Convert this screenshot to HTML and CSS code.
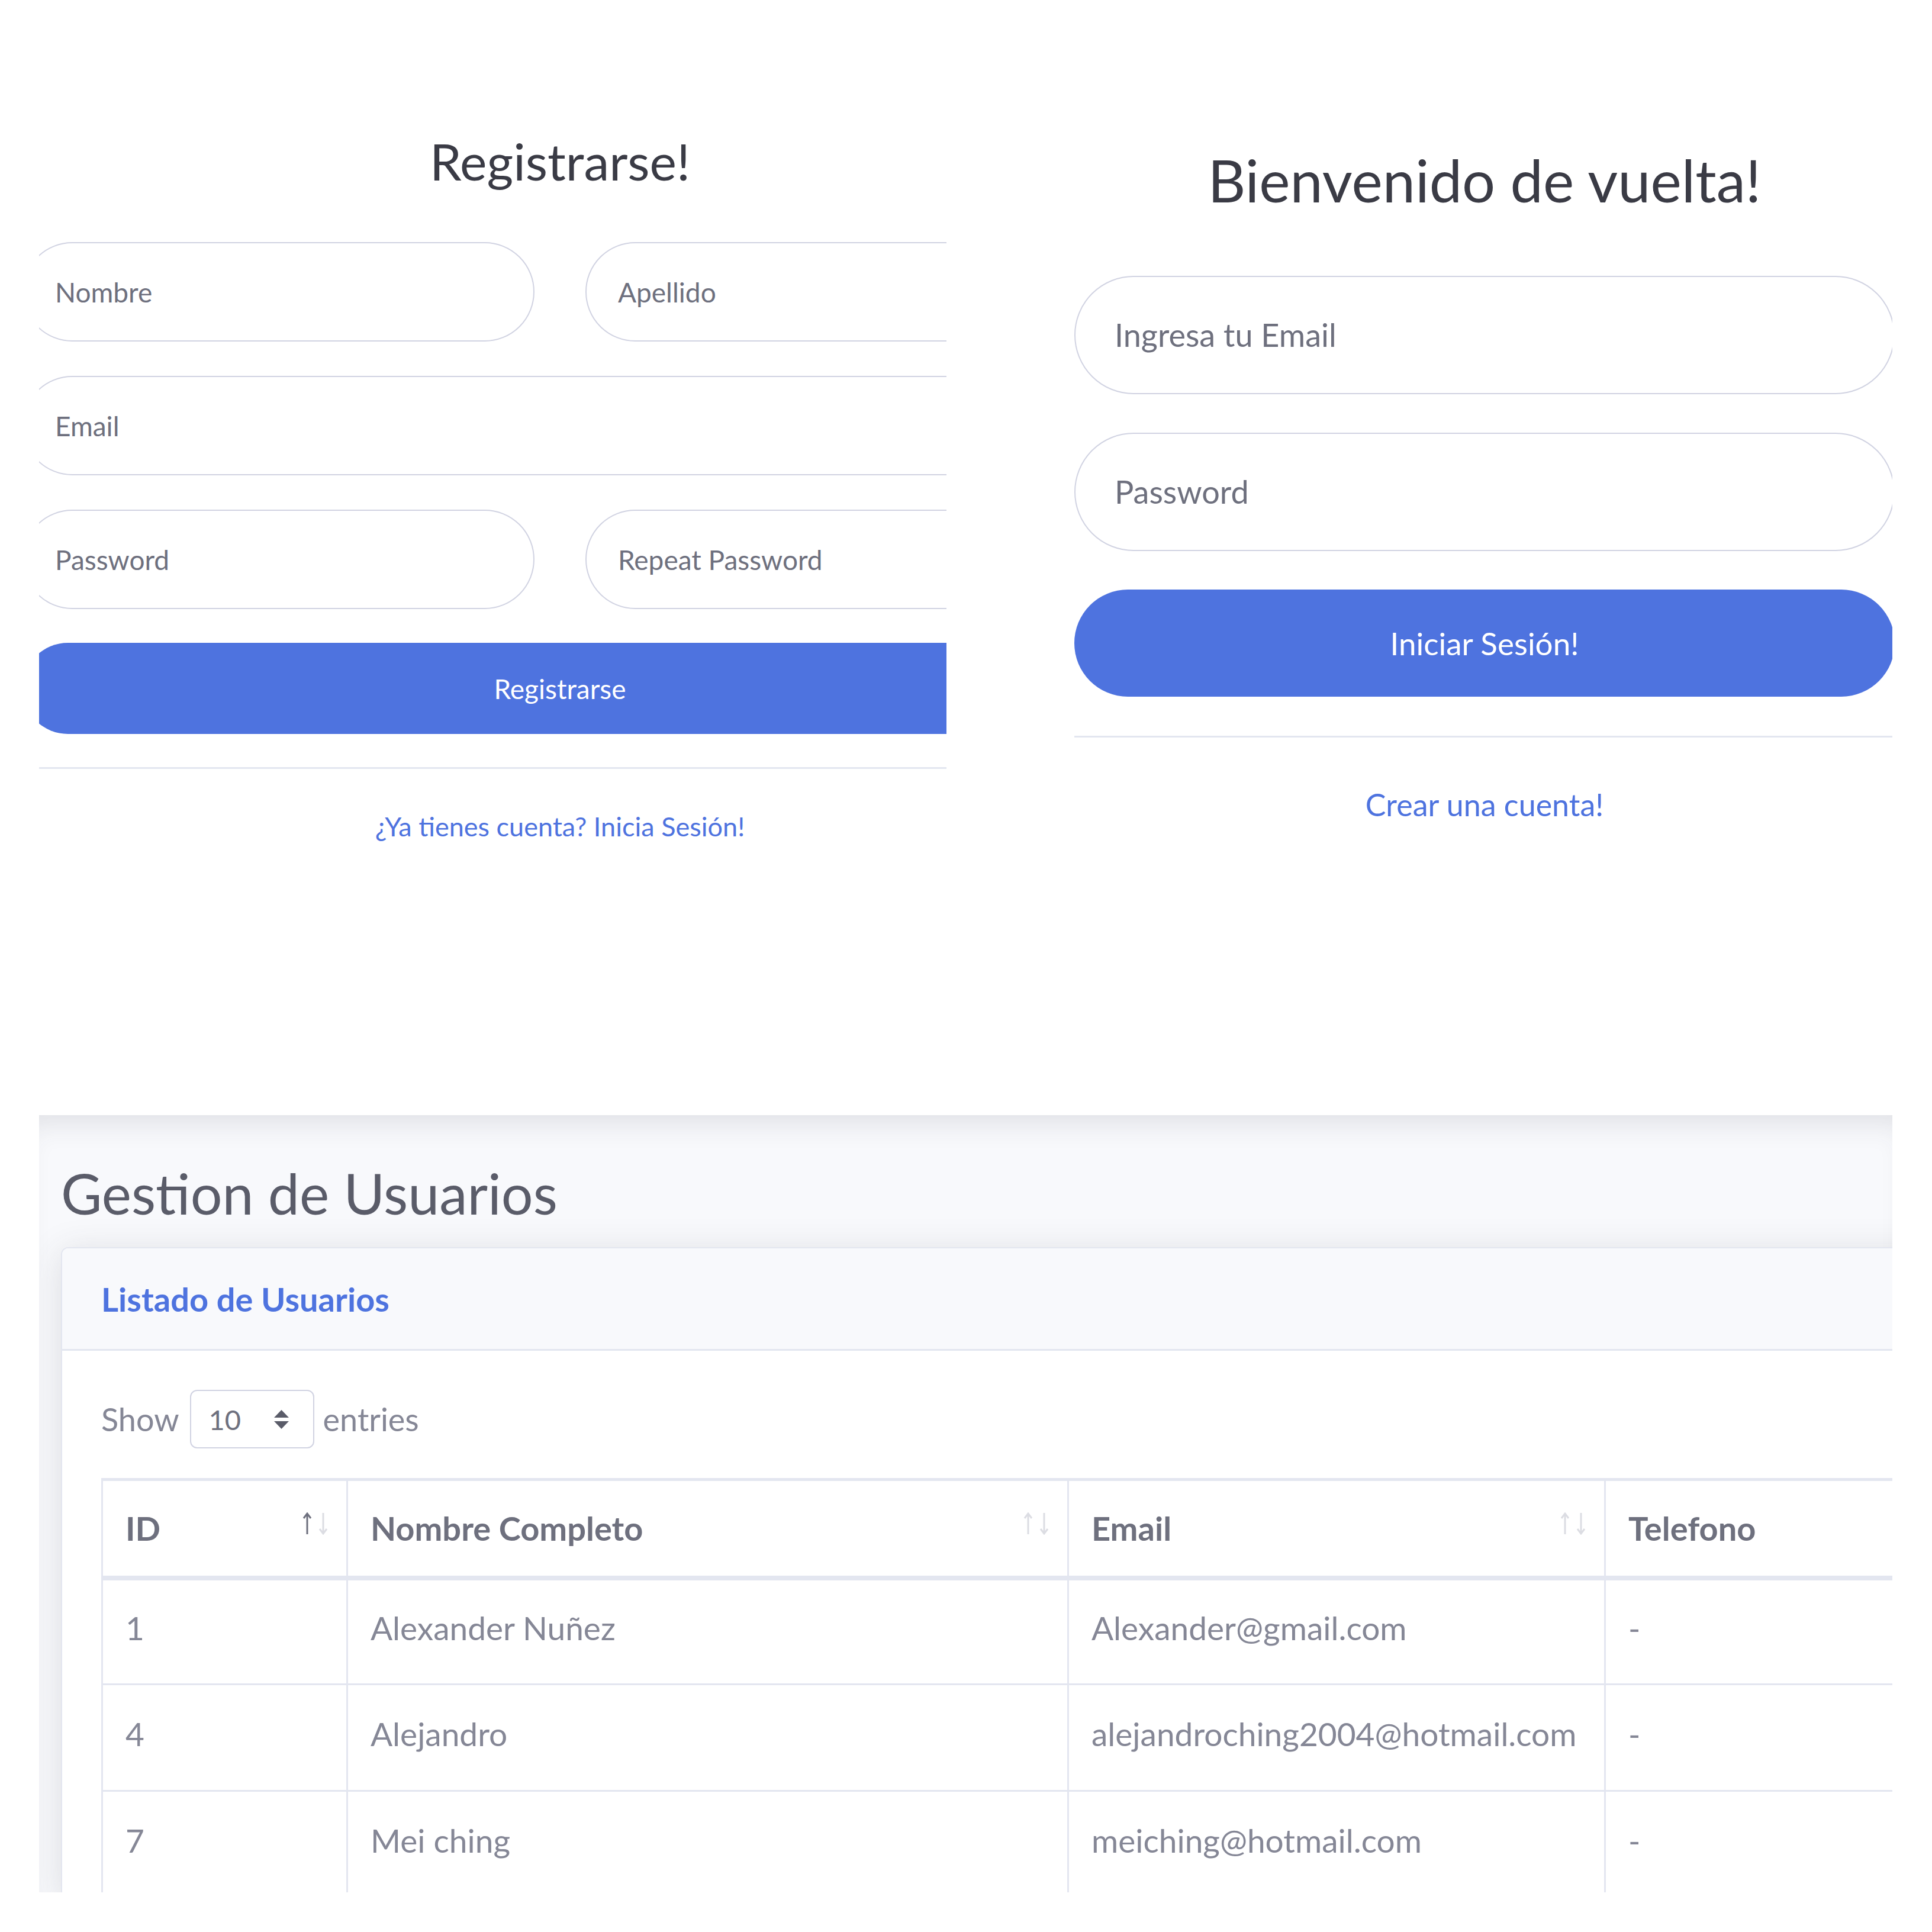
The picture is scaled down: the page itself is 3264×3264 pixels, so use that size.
FILE: index.html
```html
<!DOCTYPE html>
<html lang="es">
<head>
<meta charset="utf-8">
<title>Usuarios</title>
<link rel="stylesheet" href="styles.css">
</head>
<body>
<div class="page">
  <div class="top">
    <section class="reg-panel">
      <form class="reg-form">
        <h1 class="reg-title">Registrarse!</h1>
        <div class="stack reg-stack">
          <div class="row2">
            <input class="field reg-field" type="text" placeholder="Nombre">
            <input class="field reg-field" type="text" placeholder="Apellido">
          </div>
          <input class="field reg-field" type="email" placeholder="Email">
          <div class="row2">
            <input class="field reg-field" type="password" placeholder="Password">
            <input class="field reg-field" type="password" placeholder="Repeat Password">
          </div>
        </div>
        <button class="btn reg-btn" type="button">Registrarse</button>
        <hr class="sep reg-sep">
        <div class="link-row reg-link"><a href="#">¿Ya tienes cuenta? Inicia Sesión!</a></div>
      </form>
    </section>
    <section class="login-panel">
      <form class="login-form">
        <h1 class="login-title">Bienvenido de vuelta!</h1>
        <div class="stack login-stack">
          <input class="field login-field" type="email" placeholder="Ingresa tu Email">
          <input class="field login-field" type="password" placeholder="Password">
        </div>
        <button class="btn login-btn" type="button">Iniciar Sesión!</button>
        <hr class="sep login-sep">
        <div class="link-row login-link"><a href="#">Crear una cuenta!</a></div>
      </form>
    </section>
  </div>

  <section class="users-panel">
    <h1 class="users-title">Gestion de Usuarios</h1>
    <div class="card">
      <div class="card-header"><h6>Listado de Usuarios</h6></div>
      <div class="card-body">
        <div class="length">
          <span>Show</span>
          <div class="select">
            <span>10</span>
            <svg class="caret" width="27" height="34" viewBox="0 0 27 34"><path d="M1 14 L13.5 1 L26 14 Z M1 20 L26 20 L13.5 33 Z" fill="#5a5c69"/></svg>
          </div>
          <span>entries</span>
        </div>
        <table class="users">
          <colgroup>
            <col class="w-id"><col class="w-name"><col class="w-mail"><col class="w-tel">
          </colgroup>
          <thead>
            <tr>
              <th class="sortable">ID
                <svg class="arr arr-up on" width="18" height="38" viewBox="0 0 18 38"><path d="M9 3 V37 M3 10 L9 2 L15 10" fill="none" stroke="currentColor" stroke-width="3"/></svg>
                <svg class="arr arr-down" width="18" height="38" viewBox="0 0 18 38"><path d="M9 1 V35 M3 28 L9 36 L15 28" fill="none" stroke="currentColor" stroke-width="3"/></svg>
              </th>
              <th class="sortable">Nombre Completo
                <svg class="arr arr-up" width="18" height="38" viewBox="0 0 18 38"><path d="M9 3 V37 M3 10 L9 2 L15 10" fill="none" stroke="currentColor" stroke-width="3"/></svg>
                <svg class="arr arr-down" width="18" height="38" viewBox="0 0 18 38"><path d="M9 1 V35 M3 28 L9 36 L15 28" fill="none" stroke="currentColor" stroke-width="3"/></svg>
              </th>
              <th class="sortable">Email
                <svg class="arr arr-up" width="18" height="38" viewBox="0 0 18 38"><path d="M9 3 V37 M3 10 L9 2 L15 10" fill="none" stroke="currentColor" stroke-width="3"/></svg>
                <svg class="arr arr-down" width="18" height="38" viewBox="0 0 18 38"><path d="M9 1 V35 M3 28 L9 36 L15 28" fill="none" stroke="currentColor" stroke-width="3"/></svg>
              </th>
              <th>Telefono</th>
            </tr>
          </thead>
          <tbody>
            <tr><td>1</td><td>Alexander Nuñez</td><td>Alexander@gmail.com</td><td>-</td></tr>
            <tr><td>4</td><td>Alejandro</td><td>alejandroching2004@hotmail.com</td><td>-</td></tr>
            <tr><td>7</td><td>Mei ching</td><td>meiching@hotmail.com</td><td>-</td></tr>
          </tbody>
        </table>
      </div>
    </div>
  </section>
</div>
</body>
</html>
```
FILE: styles.css
```css
* { box-sizing: border-box; }
html, body { margin: 0; padding: 0; }
body {
  width: 3264px;
  height: 3264px;
  overflow: hidden;
  background: #fff;
  font-family: "Lato", "Noto Sans", "DejaVu Sans", sans-serif;
  color: #858796;
}
.page { width: 3264px; }
.top { display: flex; height: 1884px; }

/* shared form parts */
.field {
  display: block;
  width: 100%;
  border: 2px solid #d1d3e2;
  border-radius: 300px;
  background: #fff;
  font-family: inherit;
  color: #6e707e;
  outline: none;
}
.field::placeholder { color: #6e707e; opacity: 1; }
.stack { display: flex; flex-direction: column; }
.row2 { display: grid; grid-template-columns: 1fr 1fr; gap: 86px; }
.btn {
  display: block;
  width: 100%;
  border: 0;
  border-radius: 300px;
  background: #4e73df;
  color: #fff;
  font-family: inherit;
  padding: 0;
}
.sep { border: 0; border-top: 3px solid #e3e6f0; margin: 0; }
.link-row { text-align: center; line-height: 1.5; }
.link-row a { color: #4e73df; text-decoration: none; }
h1, h6 { margin: 0; font-weight: 400; }

/* register */
.reg-panel { flex: none; margin-left: 66px; width: 1533px; overflow: hidden; }
.reg-form { width: 1816px; margin-left: -28px; padding-top: 220px; }
.reg-title { font-size: 86px; line-height: 1.2; color: #3a3b45; text-align: center; margin-bottom: 86px; }
.reg-stack { gap: 58px; }
.reg-field { height: 168px; padding: 0 53px; font-size: 46px; }
.reg-btn { margin-top: 57px; height: 154px; font-size: 46px; }
.reg-sep { margin-top: 56px; }
.reg-link { margin-top: 64px; font-size: 45px; }

/* login */
.login-panel { flex: none; margin-left: 216px; width: 1382px; overflow: hidden; }
.login-form { width: 1386px; padding-top: 245px; }
.login-title { font-size: 99px; line-height: 1.2; color: #3a3b45; text-align: center; margin-bottom: 102px; }
.login-stack { gap: 65px; }
.login-field { height: 200px; padding: 0 66px; font-size: 54px; }
.login-btn { margin-top: 65px; height: 181px; font-size: 53px; }
.login-sep { margin-top: 66px; }
.login-link { margin-top: 74px; font-size: 52px; }

/* users */
.users-panel {
  margin-left: 66px;
  width: 3131px;
  height: 1313px;
  overflow: hidden;
  background: #f8f9fc;
  padding: 74px 0 0 37px;
  box-shadow: inset 0 40px 50px -30px rgba(58, 59, 69, 0.14);
}
.users-title { font-size: 95px; line-height: 1.2; color: #5a5c69; margin-bottom: 35px; }
.card {
  width: 3300px;
  background: #fff;
  border: 2px solid #e3e6f0;
  border-radius: 12px;
  box-shadow: 0 8px 60px rgba(58, 59, 69, 0.15);
}
.card-header {
  height: 173px;
  display: flex;
  align-items: center;
  padding: 0 66px;
  background: #f8f9fc;
  border-bottom: 3px solid #e3e6f0;
  border-radius: 10px 10px 0 0;
}
.card-header h6 { font-size: 56px; font-weight: 700; color: #4e73df; }
.card-body { padding: 66px 0 0 66px; }
.length { display: flex; align-items: center; height: 99px; font-size: 54px; color: #858796; }
.select {
  width: 210px;
  height: 99px;
  margin: 0 15px 0 18px;
  border: 2px solid #d1d3e2;
  border-radius: 12px;
  display: flex;
  align-items: center;
  justify-content: space-between;
  padding: 0 40px 0 30px;
  font-size: 47px;
  color: #6e707e;
}
.users {
  margin-top: 50px;
  border-collapse: collapse;
  table-layout: fixed;
  width: 3345px;
  font-size: 55px;
}
.w-id { width: 414px; }
.w-name { width: 1218px; }
.w-mail { width: 907px; }
.w-tel { width: 806px; }
.users th, .users td {
  border: 3px solid #e3e6f0;
  text-align: left;
  vertical-align: middle;
  padding: 0 38px;
  white-space: nowrap;
}
.users th {
  position: relative;
  height: 166px;
  font-weight: 700;
  font-size: 56px;
  color: #6e707e;
  border-top-width: 5px;
  border-bottom-width: 8px;
}
.users td { height: 180px; color: #858796; padding-bottom: 14px; }
.arr { position: absolute; top: 53px; color: #dcdde3; }
.arr.on { color: #6e707e; }
.arr-up { right: 57px; }
.arr-down { right: 30px; }
```
